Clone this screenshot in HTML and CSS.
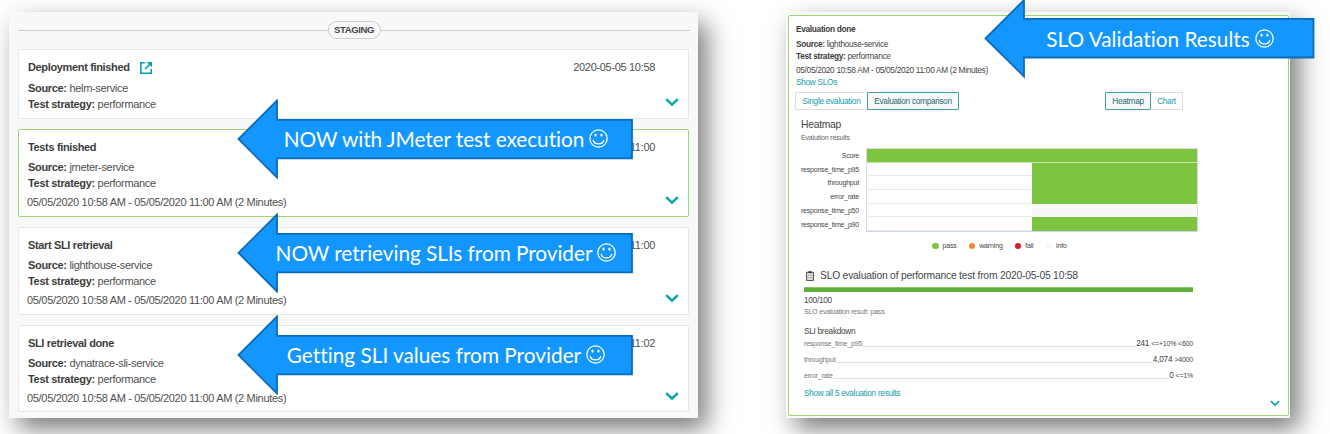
FILE: index.html
```html
<!DOCTYPE html>
<html lang="en">
<head>
<meta charset="utf-8">
<title>Staging evaluation</title>
<link rel="stylesheet" href="styles.css">
</head>
<body>
<svg class="defs" width="0" height="0">
  <symbol id="chevron" viewBox="0 0 14 9"><path d="M1.2 1.2 7 6.7l5.8-5.5" fill="none" stroke="#00a1b2" stroke-width="2.3"/></symbol>
  <symbol id="arrow" viewBox="0 0 396 80"><path d="M1.5 40 40 1.5v19.3h355v38.6H40v19.1z" fill="#1496ff" stroke="#0b6cbb" stroke-width="1.8"/></symbol>
  <symbol id="smile" viewBox="0 0 18 18"><g fill="none" stroke="#fff" stroke-width="1.2"><circle cx="9" cy="9" r="8.2"/><path d="M4 10.3c.6 5 9.4 5 10 0"/></g><ellipse cx="6.2" cy="5.8" rx="1.1" ry="1.5" fill="#fff"/><ellipse cx="11.8" cy="5.8" rx="1.1" ry="1.5" fill="#fff"/></symbol>
</svg>
<main class="page">
  <section class="panel events">
    <div class="stage"><span class="stage-name">STAGING</span></div>
    <article class="card first">
      <header><h2>Deployment finished<svg class="open" viewBox="0 0 12 12"><path d="M5 .8H.8v10.4h10.4V7M11 1 5 7" fill="none" stroke="#00a1b2" stroke-width="1.6"/><path d="M6.8 0H12v5.2z" fill="#00a1b2"/></svg></h2><time>2020-05-05 10:58</time></header>
      <p><b>Source:</b> helm-service</p><p><b>Test strategy:</b> performance</p>
      <svg class="chev"><use href="#chevron"/></svg>
    </article>
    <article class="card passed">
      <header><h2>Tests finished</h2><time>2020-05-05 11:00</time></header>
      <p><b>Source:</b> jmeter-service</p><p><b>Test strategy:</b> performance</p>
      <p class="range">05/05/2020 10:58 AM - 05/05/2020 11:00 AM (2 Minutes)</p>
      <svg class="chev"><use href="#chevron"/></svg>
    </article>
    <article class="card third">
      <header><h2>Start SLI retrieval</h2><time>2020-05-05 11:00</time></header>
      <p><b>Source:</b> lighthouse-service</p><p><b>Test strategy:</b> performance</p>
      <p class="range">05/05/2020 10:58 AM - 05/05/2020 11:00 AM (2 Minutes)</p>
      <svg class="chev"><use href="#chevron"/></svg>
    </article>
    <article class="card fourth">
      <header><h2>SLI retrieval done</h2><time>2020-05-05 11:02</time></header>
      <p><b>Source:</b> dynatrace-sli-service</p><p><b>Test strategy:</b> performance</p>
      <p class="range">05/05/2020 10:58 AM - 05/05/2020 11:00 AM (2 Minutes)</p>
      <svg class="chev"><use href="#chevron"/></svg>
    </article>
  </section>

  <section class="panel evaluation">
    <div class="eval">
      <h2>Evaluation done</h2>
      <p><b>Source:</b> lighthouse-service</p><p><b>Test strategy:</b> performance</p>
      <p class="range">05/05/2020 10:58 AM - 05/05/2020 11:00 AM (2 Minutes)</p>
      <a class="slos">Show SLOs</a>
      <div class="toggles">
        <div class="group"><span class="btn single">Single evaluation</span><span class="btn comparison on">Evaluation comparison</span></div>
        <div class="group"><span class="btn heat on">Heatmap</span><span class="btn chart">Chart</span></div>
      </div>
      <h3>Heatmap</h3>
      <p class="sub">Evalution results</p>
      <div class="heatmap">
        <div class="labels"><span>Score</span><span>response_time_p95</span><span>throughput</span><span>error_rate</span><span>response_time_p50</span><span>response_time_p90</span></div>
        <div class="plot">
          <i class="ok edge"></i><i class="ok edge"></i><i></i><i class="ok"></i><i></i><i class="ok"></i><i></i><i class="ok"></i><i></i><i class="info"></i><i></i><i class="ok"></i>
        </div>
      </div>
      <div class="legend"><span class="pass">pass</span><span class="warning">warning</span><span class="fail">fail</span><span class="none">info</span></div>
      <div class="result">
        <h4><svg class="clip" viewBox="0 0 8 10"><path d="M.6 1.3h6.8v8.1H.6z" fill="#eee" stroke="#444" stroke-width="1"/><path d="M2.5.2h3v2h-3z" fill="#333"/><path d="M1.8 4.1l.5.5.8-1M3.8 4.3h2.4M1.8 6.6l.5.5.8-1M3.8 6.8h2.4" fill="none" stroke="#444" stroke-width=".6"/></svg><span>SLO evaluation of performance test from 2020-05-05 10:58</span></h4>
        <div class="bar"></div>
        <div class="score">100/100</div>
        <div class="verdict">SLO evaluation result: pass</div>
        <div class="breakdown">SLI breakdown</div>
        <div class="sli"><span>response_time_p95</span><i></i><b>241</b><em>&lt;=+10% &lt;600</em></div>
        <div class="sli"><span>throughput</span><i></i><b>4,074</b><em>&gt;4000</em></div>
        <div class="sli"><span>error_rate</span><i></i><b>0</b><em>&lt;=1%</em></div>
        <a class="all">Show all 5 evaluation results</a>
      </div>
      <svg class="chev small"><use href="#chevron"/></svg>
    </div>
  </section>

  <div class="callout c1"><svg class="shape"><use href="#arrow"/></svg><span>NOW with JMeter test execution</span><svg class="smile"><use href="#smile"/></svg></div>
  <div class="callout c2"><svg class="shape"><use href="#arrow"/></svg><span>NOW retrieving SLIs from Provider</span><svg class="smile"><use href="#smile"/></svg></div>
  <div class="callout c3"><svg class="shape"><use href="#arrow"/></svg><span>Getting SLI values from Provider</span><svg class="smile"><use href="#smile"/></svg></div>
  <div class="callout c4"><svg class="shape" viewBox="0 0 331 80"><path d="M1.5 39.5 40 1v18.8h289.5v38.7H40v19z" fill="#1496ff" stroke="#0b6cbb" stroke-width="1.8"/></svg><span>SLO Validation Results</span><svg class="smile"><use href="#smile"/></svg></div>
</main>
</body>
</html>
```
FILE: styles.css
```css
* { box-sizing: border-box; margin: 0; padding: 0; }
body { width: 1330px; height: 434px; overflow: hidden; background: #fff; font-family: "Liberation Sans", Arial, sans-serif; color: #454646; }
.defs { position: absolute; }
svg { display: block; flex: none; }
h2, h3, h4 { font-weight: normal; }
i, em { font-style: normal; }
.page { position: relative; display: flex; gap: 88px; width: 1330px; height: 434px; padding: 12px 0 0 9px; overflow: hidden; }
.panel { flex: none; height: 406px; background: #f8f8f8; box-shadow: 9px 11px 24px 0 rgba(0,0,0,.52); }
.events { width: 689px; padding: 0 9px; }
.stage { display: flex; align-items: center; height: 37px; margin-right: -1px; font-size: 9.5px; font-weight: bold; }
.stage::before, .stage::after { content: ""; flex: 1; height: 1px; background: #ccc; }
.stage-name { width: 53px; height: 18px; margin-top: -1px; border: 1px solid #ccc; border-radius: 9px; text-align: center; line-height: 16px; letter-spacing: -.35px; }
.card { position: relative; width: 671px; background: #fff; border: 1px solid #e7e7e7; border-radius: 2px; padding: 8px 33px 0 9px; font-size: 11px; letter-spacing: -.32px; line-height: 16.3px; color: #4f5050; }
.card b, .card h2, .eval b, .eval h2 { color: #3c3d3d; }
.card header { display: flex; justify-content: space-between; height: 20px; line-height: 19px; margin-bottom: 1px; }
.card h2 { display: flex; align-items: center; gap: 10px; height: 19px; font-size: 11px; font-weight: bold; letter-spacing: -.35px; }
.card p { white-space: nowrap; }
.card .range { margin-top: 2px; margin-left: -1px; }
.first { height: 70px; }
.card.first header { margin-bottom: 2px; }
.passed { height: 88px; margin-top: 10px; border: 1px solid #9fd674; }
.third { height: 88px; margin-top: 10px; }
.fourth { height: 87px; margin-top: 10px; }
.open { width: 12px; height: 12px; }
.chev { position: absolute; right: 9px; bottom: 11px; width: 14px; height: 9px; }
.fourth .chev { bottom: 10px; }
.evaluation { width: 504px; padding: 3px 2px 2px; }
.eval { position: relative; width: 501px; height: 401px; background: #fff; border: 1px solid #9fd674; border-radius: 2px; padding: 7px 0 0 7px; font-size: 8.3px; letter-spacing: -.31px; line-height: 12px; }
.eval h2 { font-size: 8.3px; font-weight: bold; height: 14.5px; }
.range { white-space: nowrap; }
.eval .range { margin-top: 2.5px; }
.slos { display: block; color: #1a9cb0; }
.toggles { display: flex; gap: 146px; margin-top: 4px; margin-left: -1px; }
.group { display: flex; }
.btn { height: 18px; border: 1px solid #ddd; border-radius: 1px; line-height: 17px; text-align: center; color: #1a9cb0; white-space: nowrap; font-size: 8.3px; }
.on { border-color: #459da6; background: #f8f8f8; color: #236b77; }
.single { width: 72px; border-right: 0; }
.comparison { width: 92px; }
.heat { width: 46px; }
.chart { width: 32px; border-left: 0; }
.eval h3 { font-size: 10.3px; letter-spacing: -.25px; margin: 8px 0 0 5px; line-height: 14px; }
.sub { margin-left: 5px; font-size: 7px; letter-spacing: -.15px; line-height: 11px; color: #666; }
.heatmap { display: flex; margin: 5px 0 0 4px; }
.labels { width: 66px; padding-right: 7px; padding-top: 1px; display: flex; flex-direction: column; text-align: right; font-size: 7px; letter-spacing: -.2px; line-height: 13.7px; }
.labels span { white-space: nowrap; align-self: flex-end; }
.plot { display: grid; grid-template: repeat(6, 1fr) / 1fr 1fr; width: 332px; height: 84px; border: 1px solid #ddd; border-bottom-color: #ccd6eb; }
.plot i { border-bottom: 1px solid #e9e9e9; }
.plot .ok { background: #7dc540; border: 0; }
.plot .edge { border-bottom: 1px solid #c9e7b0; }
.plot .info { background: #f8f8f8; border: 0; }
.legend { display: flex; margin: 8px 0 0 136px; font-size: 7px; letter-spacing: -.15px; line-height: 12px; }
.legend span { display: flex; align-items: center; gap: 4px; }
.legend span::before { content: ""; width: 6.5px; height: 6.5px; border-radius: 50%; background: #7dc540; }
.legend .warning { margin-left: 12px; } .legend .warning::before { background: #fd8232; }
.legend .fail { margin-left: 12px; } .legend .fail::before { background: #dc172a; }
.legend .none { margin-left: 12px; } .legend .none::before { background: #f8f8f8; }
.result { width: 389px; margin: 15px 0 0 8px; }
.result h4 { display: flex; align-items: center; gap: 6px; font-size: 10.3px; letter-spacing: -.21px; height: 18px; padding-left: 2px; }
.clip { width: 8px; height: 10px; }
.bar { height: 5px; margin-top: 2px; background: #5ead35; border-top: 1px solid #8cc66c; }
.score { margin-top: 3px; line-height: 11px; }
.verdict { font-size: 7px; letter-spacing: -.19px; line-height: 11px; color: #777; }
.breakdown { margin-top: 8px; line-height: 12px; }
.sli { display: flex; align-items: flex-end; height: 16px; font-size: 7px; letter-spacing: -.2px; line-height: 12px; }
.breakdown + .sli { height: 13px; }
.sli span { color: #777; }
.sli i { flex: 1; height: 1px; background: #e2e2e2; margin-bottom: 3px; }
.sli b { font-size: 8.2px; font-weight: normal; margin-right: 2px; }
.all { display: block; margin-top: 5px; color: #1a9cb0; }
.small { width: 10px; height: 7px; right: 8px; bottom: 8px; }
.callout { position: absolute; display: flex; justify-content: center; align-items: center; width: 396px; height: 80px; color: #fff; font: 20.8px Lato, sans-serif; font-variant-ligatures: none; white-space: nowrap; gap: 5px; padding-left: 22px; padding-bottom: 1px; }
.shape { position: absolute; left: 0; top: 0; width: 100%; height: 80px; }
.callout span, .smile { position: relative; }
.smile { width: 19px; height: 19px; }
.c1 { left: 237px; top: 99px; letter-spacing: -.06px; }
.c2 { left: 237px; top: 213px; letter-spacing: -.05px; }
.c3 { left: 237px; top: 315px; }
.c4 { left: 984px; top: -1px; width: 331px; padding-left: 21px; }
```
